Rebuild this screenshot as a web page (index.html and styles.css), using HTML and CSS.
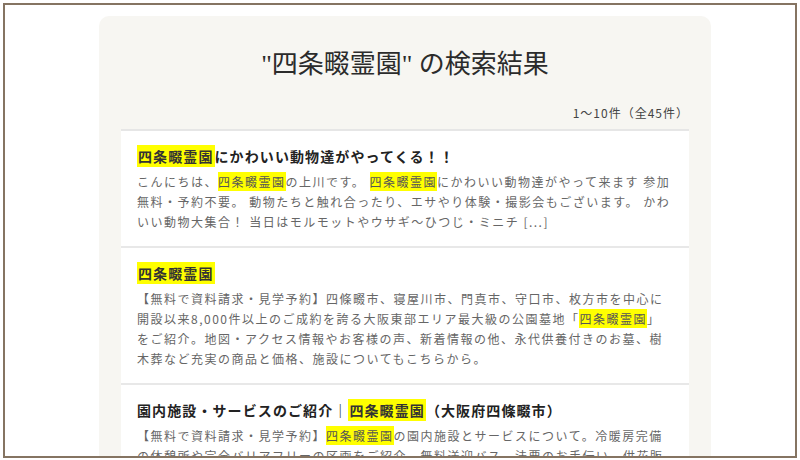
FILE: index.html
```html
<!DOCTYPE html>
<html lang="ja">
<head>
  <meta charset="UTF-8">
  <title>"四条畷霊園" の検索結果</title>
  <link rel="stylesheet" href="styles.css">
</head>
<body>
  <div class="frame">
    <div class="search-card">
      <h1 class="search-title">"四条畷霊園" の検索結果</h1>
      <p class="search-count">1〜10件（全45件）</p>

      <ul class="result-list">
        <li class="result">
          <h2 class="result-title"><span class="hit">四条畷霊園</span>にかわいい動物達がやってくる！！</h2>
          <p class="result-text">こんにちは、<span class="hit">四条畷霊園</span>の上川です。 <span class="hit">四条畷霊園</span>にかわいい動物達がやって来ます 参加無料・予約不要。 動物たちと触れ合ったり、エサやり体験・撮影会もございます。 かわいい動物大集合！ 当日はモルモットやウサギ〜ひつじ・ミニチ [...]</p>
        </li>
        <li class="result">
          <h2 class="result-title"><span class="hit">四条畷霊園</span></h2>
          <p class="result-text">【無料で資料請求・見学予約】四條畷市、寝屋川市、門真市、守口市、枚方市を中心に開設以来8,000件以上のご成約を誇る大阪東部エリア最大級の公園墓地「<span class="hit">四条畷霊園</span>」をご紹介。地図・アクセス情報やお客様の声、新着情報の他、永代供養付きのお墓、樹木葬など充実の商品と価格、施設についてもこちらから。</p>
        </li>
        <li class="result">
          <h2 class="result-title">園内施設・サービスのご紹介｜<span class="hit">四条畷霊園</span>（大阪府四條畷市）</h2>
          <p class="result-text">【無料で資料請求・見学予約】<span class="hit">四条畷霊園</span>の園内施設とサービスについて。冷暖房完備の休憩所や完全バリアフリーの区画をご紹介。無料送迎バス、法要のお手伝い、供花販売なども行っております。</p>
        </li>
      </ul>
    </div>
  </div>
</body>
</html>
```

FILE: styles.css
```css
html, body {
  margin: 0;
  padding: 0;
  background-color: #fff;
}
body {
  font-family: "Noto Sans CJK JP", "Noto Sans", sans-serif;
  color: #333;
}
.frame {
  margin: 3px;
  height: 451px;
  border: 2px solid #857462;
  overflow: hidden;
}
.search-card {
  margin: 11px 0 0 94px;
  width: 568px;
  padding: 31px 22px 0;
  background-color: #f7f6f2;
  border-radius: 10px;
  min-height: 600px;
}
.search-title {
  margin: 0;
  font-family: "Liberation Serif", "Noto Sans CJK JP", serif;
  font-size: 26px;
  font-weight: normal;
  line-height: 36px;
  text-align: center;
  color: #2b2b2b;
}
.search-count {
  margin: 21px 0 7px 0;
  font-size: 12px;
  line-height: 18px;
  text-align: right;
  color: #444;
  letter-spacing: 1px;
}
.result-list {
  list-style: none;
  margin: 0;
  padding: 0;
  background-color: #fff;
  border-top: 2px solid #e6e6e6;
}
.result {
  padding: 14px 16px;
  border-bottom: 2px solid #e8e8e8;
}
.result-title {
  margin: 0 0 5px;
  font-size: 14px;
  font-weight: bold;
  line-height: 22px;
  letter-spacing: 1.1px;
  color: #222;
}
.result-text {
  margin: 0;
  font-size: 12px;
  line-height: 20px;
  letter-spacing: 1.5px;
  color: #666;
}
.hit {
  background-color: #ffff00;
  color: #333;
  padding: 1px 1px;
}
.result-text .hit {
  color: #555;
  padding: 1px 0;
}
```
